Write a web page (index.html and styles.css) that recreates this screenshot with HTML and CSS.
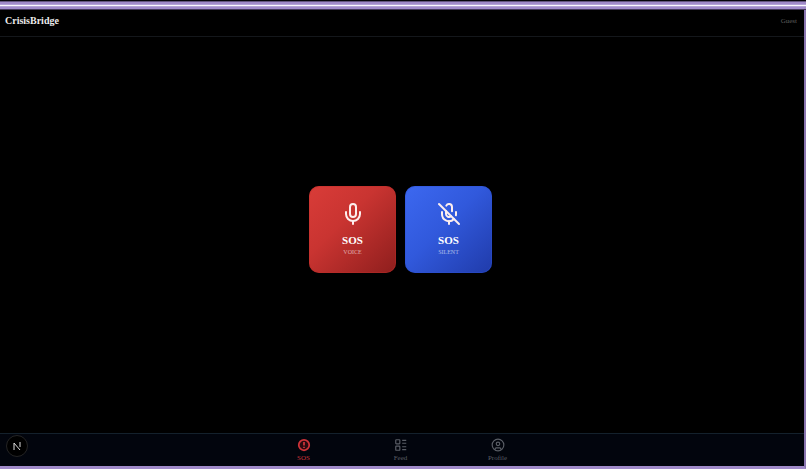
FILE: index.html
```html
<!DOCTYPE html>
<html lang="en">
  <head>
    <meta charset="UTF-8" />
    <meta name="viewport" content="width=device-width, initial-scale=1.0" />
    <title>CrisisBridge</title>
    <link rel="stylesheet" href="styles.css">
  </head>

  <body>
    <div class="frame-top"></div>

    <div class="app">
      <header class="header">
        <h1 class="brand">CrisisBridge</h1>
        <span class="user">Guest</span>
      </header>

      <main class="main">
        <button class="sos voice" type="button">
          <svg class="sos-icon" viewBox="0 0 24 24" aria-hidden="true">
            <path d="M12 2a3 3 0 0 0-3 3v7a3 3 0 0 0 6 0V5a3 3 0 0 0-3-3Z" />
            <path d="M19 10v2a7 7 0 0 1-14 0v-2" />
            <path d="M12 19v3" />
          </svg>
          <span class="sos-title">SOS</span>
          <span class="sos-mode">VOICE</span>
        </button>

        <button class="sos silent" type="button">
          <svg class="sos-icon" viewBox="0 0 24 24" aria-hidden="true">
            <path d="M2 2l20 20" />
            <path d="M18.89 13.23A7.12 7.12 0 0 0 19 12v-2" />
            <path d="M5 10v2a7 7 0 0 0 12 5" />
            <path d="M15 9.34V5a3 3 0 0 0-5.68-1.33" />
            <path d="M9 9v3a3 3 0 0 0 5.12 2.12" />
            <path d="M12 19v3" />
          </svg>
          <span class="sos-title">SOS</span>
          <span class="sos-mode">SILENT</span>
        </button>
      </main>

      <nav class="nav">
        <a class="tab active" href="#sos">
          <svg class="tab-icon" viewBox="0 0 24 24" aria-hidden="true">
            <circle cx="12" cy="12" r="9" />
            <path d="M12 7v6M12 15v2" />
          </svg>
          SOS
        </a>
        <a class="tab" href="#feed">
          <svg class="tab-icon" viewBox="0 0 24 24" aria-hidden="true">
            <rect x="3" y="3" width="7" height="7" rx="1" />
            <rect x="3" y="14" width="7" height="7" rx="1" />
            <path d="M14 4h7M14 9h7M14 15h7M14 20h7" />
          </svg>
          Feed
        </a>
        <a class="tab" href="#profile">
          <svg class="tab-icon" viewBox="0 0 24 24" aria-hidden="true">
            <circle cx="12" cy="12" r="10" />
            <circle cx="12" cy="10" r="3" />
            <path d="M7 20v-1a2 2 0 0 1 2-2h6a2 2 0 0 1 2 2v1" />
          </svg>
          Profile
        </a>
      </nav>

      <button class="dev-badge" type="button" aria-label="Open dev tools">
        <svg class="dev-icon" viewBox="0 0 10 10" aria-hidden="true">
          <path d="M2 9V2l6 7" />
          <path d="M8 1v5" />
        </svg>
      </button>
    </div>
  </body>
</html>
```

FILE: styles.css
```css
* {
  box-sizing: border-box;
  margin: 0;
  padding: 0;
}

body {
  min-height: 100vh;
  display: flex;
  flex-direction: column;
  background: #000;
  font-family: "Liberation Serif", "Times New Roman", serif;
}

/* striped bar above the app */
.frame-top {
  height: 10px;
  background: linear-gradient(
    #08060c 0 1px,
    #655780 1px 2px,
    #a18bca 2px 4px,
    #b4a3d6 4px 5px,
    #fbf9ff 5px 6px,
    #b4a3d6 6px 7px,
    #a18bca 7px 9px,
    #44395a 9px 10px
  );
}

.app {
  position: relative;
  flex: 1;
  display: flex;
  flex-direction: column;
  border-right: 2px solid #8a76b1;
  border-bottom: 3px solid #a18bca;
}

.header {
  display: flex;
  align-items: center;
  justify-content: space-between;
  height: 27px;
  padding: 0 7px 4px 5px;
  border-bottom: 1px solid #14171b;
}

.brand {
  color: #ececec;
  font-size: 10px;
  line-height: 12px;
}

.user {
  color: #5e5e5e;
  font-size: 7px;
  line-height: 8px;
}

.main {
  flex: 1;
  display: flex;
  align-items: center;
  justify-content: center;
  gap: 9px;
  padding: 0 3px 12px 0;
}

.sos {
  width: 87px;
  height: 87px;
  display: flex;
  flex-direction: column;
  align-items: center;
  padding-top: 16px;
  border: none;
  border-radius: 10px;
  color: #fff;
  font-family: inherit;
  cursor: pointer;
}

.voice {
  background: linear-gradient(135deg, #d93c38, #c93431 40%, #8e1e1d);
  box-shadow: inset 0 0 0 1px rgba(190, 45, 40, 0.4);
}

.silent {
  background: linear-gradient(135deg, #3c68f0, #3159dc 45%, #203baa);
  box-shadow: inset 0 0 0 1px rgba(45, 80, 210, 0.4);
}

.sos-icon {
  width: 24px;
  height: 24px;
  fill: none;
  stroke: #fdeeee;
  stroke-width: 2;
  stroke-linecap: round;
  stroke-linejoin: round;
}

.sos-title {
  margin-top: 8px;
  font-size: 11px;
  font-weight: bold;
  line-height: 12px;
}

.sos-mode {
  margin-top: 2px;
  color: rgba(255, 255, 255, 0.6);
  font-size: 6px;
  line-height: 8px;
}

.nav {
  display: flex;
  justify-content: center;
  height: 33px;
  padding-right: 3px;
  background: #02050d;
  border-top: 1px solid #14212c;
}

.tab {
  width: 97px;
  display: flex;
  flex-direction: column;
  align-items: center;
  gap: 2px;
  padding-top: 4px;
  color: #5a5e66;
  font-size: 7px;
  line-height: 8px;
  text-decoration: none;
}

.active {
  color: #cf3339;
}

.tab-icon {
  width: 14px;
  height: 14px;
  fill: none;
  stroke: currentColor;
  stroke-width: 2;
}

.active .tab-icon {
  fill: #2a0a10;
  stroke-width: 3;
}

/* floats over the nav bar */
.dev-badge {
  position: absolute;
  left: 6px;
  bottom: 9px;
  width: 22px;
  height: 22px;
  display: flex;
  align-items: center;
  justify-content: center;
  background: #000;
  border: 1px solid #242424;
  border-radius: 50%;
  cursor: pointer;
}

.dev-icon {
  width: 10px;
  height: 10px;
  fill: none;
  stroke: #ddd;
  stroke-width: 1;
}
```
